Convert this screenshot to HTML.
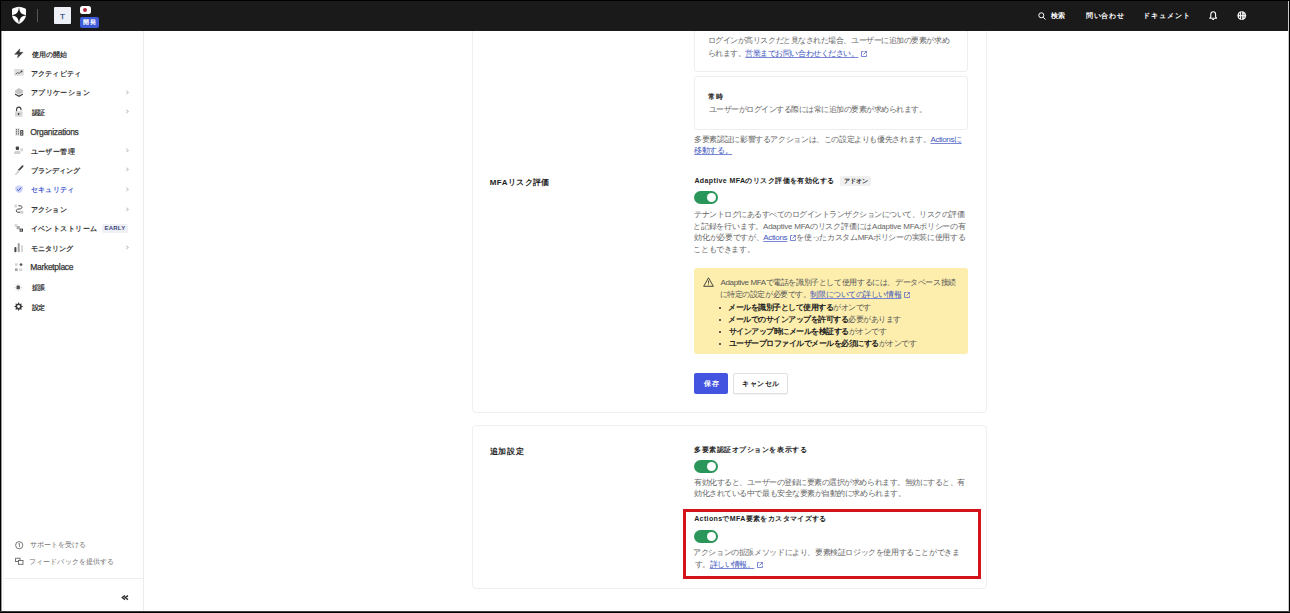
<!DOCTYPE html>
<html><head><meta charset="utf-8">
<style>
*{box-sizing:border-box;margin:0;padding:0}
html,body{width:1290px;height:613px;overflow:hidden;background:#fff}
body{font-family:"Liberation Sans",sans-serif;position:relative;color:#1e1e1e}
.ab{position:absolute;white-space:nowrap}
.bd{position:absolute;background:#000;z-index:10}
#hdr{position:absolute;left:1px;top:1px;width:1287px;height:30px;background:#1a1a1a;z-index:5}
#side{position:absolute;left:1px;top:31px;width:143px;height:580px;background:#fff;border-right:1px solid #ececec}
.hn{position:absolute;font-size:7px;font-weight:bold;color:#fff;line-height:12px;white-space:nowrap}
.nav{position:absolute;font-size:7px;font-weight:bold;color:#363636;white-space:nowrap;line-height:12px}
.chev{position:absolute;left:125px;width:3.3px;height:3.3px;border-right:0.8px solid #c8c8c8;border-top:0.8px solid #c8c8c8;transform:rotate(45deg)}
.card{position:absolute;left:472px;width:515px;border:1px solid #efefef;border-radius:4px;background:#fff}
.t{position:absolute;font-size:8px;line-height:12px;color:#666;white-space:nowrap}
.h{position:absolute;font-size:7px;line-height:12px;color:#1e1e1e;font-weight:bold;white-space:nowrap}
a{color:#4256bd;text-decoration:underline;text-decoration-color:#7a87d2}
.tog{position:absolute;left:694px;width:24px;height:13px;border-radius:7px;background:#2b9659}
.tog:after{content:"";position:absolute;right:2px;top:2px;width:9px;height:9px;border-radius:50%;background:#fff}
.ext{display:inline-block;width:6px;height:6px;margin-left:3px;vertical-align:-1px}
</style></head><body>
<div id="hdr">
  <svg class="ab" style="left:-1px;top:-1px" width="40" height="31" viewBox="0 0 40 31">
<path d="M12 9.8 C12 8.9 12.5 8.5 13.3 8.2 C15.2 7.4 17.2 6.9 19 6.7 C20.8 6.9 22.8 7.4 24.7 8.2 C25.5 8.5 26 8.9 26 9.8 L26 14.5 C26 18.8 23 22 19 24 C15 22 12 18.8 12 14.5 Z" fill="#fff"/>
<path d="M19 6.2 C19.5 11.8 20.4 14.3 26.6 15.2 C20.4 16.1 19.5 18.6 19 24.6 C18.5 18.6 17.6 16.1 11.4 15.2 C17.6 14.3 18.5 11.8 19 6.2 Z" fill="#1a1a1a"/>
</svg>
  <div class="ab" style="left:36px;top:8px;width:1px;height:13px;background:#555"></div>
  <div class="ab" style="left:53px;top:6px;width:17px;height:17px;background:#eef0f7;border-radius:1px;font-size:8px;color:#3d5585;text-align:center;line-height:19px;-webkit-text-stroke:0.25px #3d5585">T</div>
  <div class="ab" style="left:79px;top:4.5px;width:11px;height:8px;background:#fff;border-radius:2.5px"><div class="ab" style="left:3.3px;top:2px;width:4px;height:4px;border-radius:50%;background:#b3283a"></div></div>
  <div class="ab" style="left:79px;top:15.5px;width:19px;height:11px;background:#3f5bd8;border-radius:2px"><div class="ab" style="left:3px;top:1.5px;font-size:6px;font-weight:bold;color:#fff;line-height:8px;letter-spacing:0.5px">開発</div></div>
  <svg class="ab" style="left:1037px;top:11px" width="8" height="8" viewBox="0 0 8 8"><circle cx="3.3" cy="3.3" r="2.5" fill="none" stroke="#fff" stroke-width="1"/><path d="M5.1 5.1 L7.5 7.5" stroke="#fff" stroke-width="1"/></svg>
  <div class="hn" id="h1" style="left:1050.00px;top:9.00px;letter-spacing:0.400px">検索</div>
  <div class="hn" id="h2" style="left:1085.00px;top:9.00px;letter-spacing:0.700px">問い合わせ</div>
  <div class="hn" id="h3" style="left:1142.00px;top:9.00px;letter-spacing:1.000px">ドキュメント</div>
  <svg class="ab" style="left:-1px;top:-1px" width="1290" height="31" viewBox="0 0 1290 31">
<path d="M1209.8 18.2 L1210.8 17 L1210.8 14.5 C1210.8 12.8 1211.9 11.8 1213.2 11.8 C1214.5 11.8 1215.6 12.8 1215.6 14.5 L1215.6 17 L1216.6 18.2 Z" fill="none" stroke="#fff" stroke-width="1.1" stroke-linejoin="round"/>
<path d="M1212.3 19.5 L1214.1 19.5" stroke="#fff" stroke-width="1"/>
<circle cx="1241.8" cy="15.6" r="4.4" fill="#f4f4f4"/>
<g fill="#1a1a1a"><rect x="1239.1" y="13.3" width="0.8" height="1.8"/><rect x="1239.1" y="16.2" width="0.8" height="1.8"/><rect x="1241.2" y="12.2" width="0.9" height="2.9"/><rect x="1241.2" y="16.2" width="0.9" height="3.2"/></g>
<g fill="#666"><rect x="1242.8" y="13.8" width="2.4" height="0.7"/><rect x="1242.8" y="16.6" width="2.4" height="0.7"/></g>
</svg>
</div>
<div id="side">
</div>
<div id="main" class="ab" style="left:0;top:0;width:1290px;height:613px">
<svg class="ab" style="left:0;top:0" width="143" height="613" viewBox="0 0 143 613">
<path d="M19.8 48.9 L14.7 54.3 L18.3 54.3 L17.6 57.8 L23 52.3 L19.3 52.3 Z" fill="#3c3c3c" stroke="#3c3c3c" stroke-width="0.5" stroke-linejoin="round"/>
<rect x="14.2" y="69" width="9.6" height="6.8" rx="0.6" fill="#dedede"/>
<path d="M15.8 74.2 L17.6 72.6 L19 73.4 L21.2 71.6" fill="none" stroke="#555" stroke-width="0.9"/><circle cx="21.6" cy="71.4" r="0.9" fill="#444"/>
<path d="M19 88 L23 90.6 L23 92.4 L19 94.8 L15 92.4 L15 90.6 Z" fill="#c4c4c4"/>
<path d="M15 93.4 L19 95.6 L23 93.4 L23 94.8 L19 97 L15 94.8 Z" fill="#3c3c3c"/>
<path d="M16.6 111.5 L16.6 109.6 C16.6 108 17.6 107.1 18.8 107.1 C20 107.1 21 108 21 109.6 L21 110.3" fill="none" stroke="#3c3c3c" stroke-width="1.1"/>
<rect x="15" y="111.2" width="7.5" height="5.5" rx="0.8" fill="#d6d6d6"/><circle cx="18.6" cy="114" r="0.9" fill="#3a3a3a"/>
<rect x="15.3" y="128.4" width="4.3" height="7.2" fill="#d8d8d8"/>
<g fill="#555"><rect x="16" y="129.2" width="1" height="1"/><rect x="18" y="129.2" width="1" height="1"/><rect x="16" y="131.3" width="1" height="1"/><rect x="18" y="131.3" width="1" height="1"/><rect x="16" y="133.4" width="1" height="1"/><rect x="18" y="133.4" width="1" height="1"/></g>
<rect x="20.2" y="130.1" width="3.1" height="5.5" fill="#3c3c3c"/><rect x="21.2" y="131.2" width="1.1" height="1.3" fill="#fff"/><rect x="21.2" y="133.4" width="1.1" height="1.3" fill="#fff"/>
<rect x="15.8" y="146.5" width="3.2" height="3.6" rx="0.8" fill="#444"/>
<path d="M14.2 154.1 L14.2 152.6 C14.2 151.5 15 150.9 16 150.9 L18.8 150.9 C19.8 150.9 20.4 151.5 20.4 152.6 L20.4 154.1 Z" fill="#cfcfcf"/>
<rect x="20.3" y="148.3" width="2.8" height="2.9" fill="#d6d6d6"/>
<path d="M22.7 166.2 L18.6 170.4" stroke="#444" stroke-width="1.7" stroke-linecap="round"/>
<path d="M18.9 170 L15.2 174.4 L16.2 174.6 L19.6 171 Z" fill="#cfcfcf" stroke="#cfcfcf" stroke-width="0.8" stroke-linejoin="round"/>
<path d="M19 185.3 L22.8 186.8 L22.8 189.2 C22.8 191.2 21 192.5 19 192.9 C17 192.5 15.3 191.2 15.3 189.2 L15.3 186.8 Z" fill="#cdd5f8"/>
<path d="M16.9 189.2 L18.5 190.7 L21.2 187.6" fill="none" stroke="#3e4fc4" stroke-width="1"/>
<rect x="14.4" y="204.6" width="2.6" height="2.8" fill="#d4d4d4"/>
<rect x="20.4" y="210.8" width="2.9" height="2.9" fill="#cfcfcf"/>
<path d="M18.4 205.8 L20.6 205.8 C22.2 205.8 22.6 208.4 20.6 208.8 L17.6 209.2 C15.8 209.5 15.8 212.2 17.6 212.2 L20.2 212.2" fill="none" stroke="#444" stroke-width="1"/>
<rect x="14.5" y="224" width="2.8" height="2.8" fill="#dadada"/>
<rect x="16.6" y="226" width="3.2" height="3.2" fill="#a8a8a8"/>
<rect x="19.6" y="228.6" width="3.4" height="3.1" fill="#3c3c3c"/><rect x="20.6" y="229.6" width="1.3" height="1.1" fill="#fff"/>
<rect x="14.4" y="247" width="2" height="5.2" rx="0.9" fill="#444"/>
<rect x="17.7" y="243" width="2" height="9.2" rx="0.9" fill="#a0a0a0"/>
<rect x="21" y="245" width="2" height="7.2" rx="0.9" fill="#d8d8d8"/>
<rect x="15" y="263.3" width="2.6" height="2.7" fill="#d6d6d6"/>
<path d="M21 263 L22.7 264.6 L21 266.2 L19.3 264.6 Z" fill="#555"/>
<rect x="15" y="268.3" width="2.7" height="2.8" fill="#a8a8a8"/>
<rect x="19.2" y="268.3" width="3.2" height="2.8" fill="#dadada"/>
<rect x="16.5" y="285.5" width="3.4" height="3.8" rx="0.5" fill="#555"/>
<path d="M18.2 283.2 L18.2 284.8 M18.2 290 L18.2 291.5 M14.6 287.4 L16 287.4 M20.4 287.4 L22.4 287.4 M15.4 284.6 L16.4 285.6 M21.2 284.6 L20.2 285.6 M15.4 290.2 L16.4 289.2 M21.2 290.2 L20.2 289.2" stroke="#d2d2d2" stroke-width="0.9"/>
<path d="M18.6 302 L19.6 303.9 L21.7 303.4 L21.3 305.5 L23.2 306.5 L21.3 307.6 L21.7 309.7 L19.6 309.2 L18.6 311.1 L17.6 309.2 L15.5 309.7 L15.9 307.6 L14 306.5 L15.9 305.5 L15.5 303.4 L17.6 303.9 Z" fill="#3c3c3c"/>
<circle cx="18.6" cy="306.5" r="1.4" fill="#fff"/>
<circle cx="19.2" cy="545.2" r="3.6" fill="none" stroke="#555" stroke-width="0.8"/>
<path d="M18.4 543.9 L19.5 543.4 L19.5 546.9" fill="none" stroke="#555" stroke-width="0.7"/>
<rect x="15.6" y="558.2" width="4.4" height="3.4" fill="none" stroke="#555" stroke-width="0.8"/>
<rect x="18.4" y="560.4" width="4.6" height="3.9" fill="#fff" stroke="#555" stroke-width="0.8"/>
</svg>

<div class="nav" id="s1" style="left:31.60px;top:49.20px;letter-spacing:0.100px">使用の開始</div>
<div class="nav" id="s2" style="left:30.60px;top:67.80px;letter-spacing:0.299px">アクティビティ</div>
<div class="nav" id="s3" style="left:30.60px;top:87.40px;letter-spacing:0.459px">アプリケーション</div><div class="chev" style="top:91px"></div>
<div class="nav" id="s4" style="left:31.60px;top:106.60px;letter-spacing:-0.800px">認証</div><div class="chev" style="top:110px"></div>
<div class="nav" id="s5" style="left:30.20px;top:125.80px;letter-spacing:-0.317px;font-size:8.5px;font-weight:normal;-webkit-text-stroke:0.25px #363636">Organizations</div>
<div class="nav" id="s6" style="left:30.60px;top:145.80px;letter-spacing:0.400px">ユーザー管理</div><div class="chev" style="top:149px"></div>
<div class="nav" id="s7" style="left:30.60px;top:164.80px;letter-spacing:0.035px">ブランディング</div><div class="chev" style="top:168px"></div>
<div class="nav" id="s8" style="left:30.60px;top:183.60px;color:#4a5fd0;letter-spacing:0.320px">セキュリティ</div><div class="chev" style="top:188px"></div>
<div class="nav" id="s9" style="left:30.60px;top:204.20px;letter-spacing:0.250px">アクション</div><div class="chev" style="top:208px"></div>
<div class="nav" id="s10" style="left:30.60px;top:222.60px;letter-spacing:0.446px">イベントストリーム</div>
<div class="ab" style="left:102px;top:224px;width:26px;height:9px;background:#eef0f6;border-radius:2px;font-size:6px;font-weight:bold;color:#3a4a7a;text-align:center;line-height:9px;letter-spacing:0.2px">EARLY</div>
<div class="nav" id="s11" style="left:30.60px;top:242.80px;letter-spacing:0.080px">モニタリング</div><div class="chev" style="top:246px"></div>
<div class="nav" id="s12" style="left:30.20px;top:261.40px;letter-spacing:-0.300px;font-size:8.5px;font-weight:normal;-webkit-text-stroke:0.25px #363636">Marketplace</div>
<div class="nav" id="s13" style="left:31.60px;top:281.80px;letter-spacing:-0.400px">拡張</div>
<div class="nav" id="s14" style="left:31.60px;top:302.20px;letter-spacing:-0.800px">設定</div>
<div class="nav" id="s15" style="left:30.00px;top:539.40px;font-weight:normal;color:#6e6e6e;letter-spacing:0.056px">サポートを受ける</div>
<div class="nav" id="s16" style="left:29.00px;top:556.40px;font-weight:normal;color:#6e6e6e;letter-spacing:0.110px">フィードバックを提供する</div>
<div class="ab" style="left:1px;top:578px;width:142px;height:1px;background:#eeeeee"></div>
<svg class="ab" style="left:0;top:0" width="143" height="613" viewBox="0 0 143 613"><path d="M125 595.6 L122.2 597.6 L125 599.6 M128 595.6 L125.2 597.6 L128 599.6" fill="none" stroke="#2a2a2a" stroke-width="1.3"/></svg>

<div class="card" style="top:-60px;height:473px"></div>
<div class="card" style="top:425px;height:164px"></div>
<div class="ab" style="left:694px;top:-40px;width:274px;height:112px;border:1px solid #eeeeee;border-radius:3px"></div>
<div class="ab" style="left:694px;top:76px;width:274px;height:54px;border:1px solid #eeeeee;border-radius:3px"></div>
<div class="t" id="m1" style="left:707.60px;top:35.20px;letter-spacing:-0.452px">ログインが高リスクだと見なされた場合、ユーザーに追加の要素が求め</div>
<div class="t" id="m2" style="left:707.60px;top:47.70px;letter-spacing:-0.466px">られます。<a>営業までお問い合わせください。</a><svg class="ext" viewBox="0 0 6 6"><path d="M2.5 0.5 L0.5 0.5 L0.5 5.5 L5.5 5.5 L5.5 3.5 M3.5 0.5 L5.5 0.5 L5.5 2.5 M5.5 0.5 L2.5 3.5" fill="none" stroke="#5a6ac8" stroke-width="0.8"/></svg></div>
<div class="h" id="m3" style="left:708.40px;top:91.20px;letter-spacing:0.800px">常時</div>
<div class="t" id="m4" style="left:708.60px;top:104.20px;letter-spacing:-0.490px">ユーザーがログインする際には常に追加の要素が求められます。</div>
<div class="t" id="m5" style="left:694.20px;top:134.00px;letter-spacing:-0.379px">多要素認証に影響するアクションは、この設定よりも優先されます。<a>Actionsに</a></div>
<div class="t" id="m6" style="left:694.20px;top:145.20px;letter-spacing:-0.400px"><a>移動する。</a></div>
<div class="h" id="m7" style="font-size:8px;left:489.80px;top:177.00px;letter-spacing:0.398px">MFAリスク評価</div>
<div class="h" id="m8" style="left:694.40px;top:174.90px;letter-spacing:0.402px">Adaptive MFAのリスク評価を有効化する</div>
<div class="ab" style="left:840px;top:176px;width:31px;height:10px;background:#f0f0f0;border-radius:2px;font-size:6px;font-weight:bold;color:#333;text-align:center;line-height:10px">アドオン</div>
<div class="tog" style="top:191px"></div>
<div class="t" id="m9" style="left:694.20px;top:209.00px;letter-spacing:-0.495px">テナントログにあるすべてのログイントランザクションについて、リスクの評価</div>
<div class="t" id="m10" style="left:693.20px;top:220.70px;letter-spacing:-0.239px">と記録を行います。Adaptive MFAのリスク評価にはAdaptive MFAポリシーの有</div>
<div class="t" id="m11" style="left:694.20px;top:232.20px;letter-spacing:-0.324px">効化が必要ですが、<a>Actions</a><svg class="ext" viewBox="0 0 6 6"><path d="M2.5 0.5 L0.5 0.5 L0.5 5.5 L5.5 5.5 L5.5 3.5 M3.5 0.5 L5.5 0.5 L5.5 2.5 M5.5 0.5 L2.5 3.5" fill="none" stroke="#5a6ac8" stroke-width="0.8"/></svg>を使ったカスタムMFAポリシーの実装に使用する</div>
<div class="t" id="m12" style="left:693.20px;top:243.50px;letter-spacing:-0.339px">こともできます。</div>
<div class="ab" style="left:694px;top:268px;width:274px;height:86px;background:#fdeead;border-radius:3px"></div>
<svg class="ab" style="left:703px;top:277px" width="11" height="10" viewBox="0 0 11 10"><path d="M5.5 0.8 L10.3 9.3 L0.7 9.3 Z" fill="none" stroke="#333" stroke-width="0.9" stroke-linejoin="round"/><path d="M5.5 3.6 L5.5 6.4" stroke="#333" stroke-width="0.9"/><circle cx="5.5" cy="7.8" r="0.5" fill="#333"/></svg>
<div class="t" id="m13" style="left:720.60px;top:277.20px;color:#555;letter-spacing:-0.395px">Adaptive MFAで電話を識別子として使用するには、データベース接続</div>
<div class="t" id="m14" style="left:719.60px;top:289.30px;color:#555;letter-spacing:-0.435px">に特定の設定が必要です。<a>制限についての詳しい情報</a><svg class="ext" viewBox="0 0 6 6"><path d="M2.5 0.5 L0.5 0.5 L0.5 5.5 L5.5 5.5 L5.5 3.5 M3.5 0.5 L5.5 0.5 L5.5 2.5 M5.5 0.5 L2.5 3.5" fill="none" stroke="#5a6ac8" stroke-width="0.8"/></svg></div>
<div class="ab" style="left:718.8px;top:306.7px;width:2.6px;height:2.6px;border-radius:50%;background:#2a2a2a"></div>
<div class="ab" style="left:718.8px;top:318.7px;width:2.6px;height:2.6px;border-radius:50%;background:#2a2a2a"></div>
<div class="ab" style="left:718.8px;top:330.7px;width:2.6px;height:2.6px;border-radius:50%;background:#2a2a2a"></div>
<div class="ab" style="left:718.8px;top:342.7px;width:2.6px;height:2.6px;border-radius:50%;background:#2a2a2a"></div>
<div class="t" id="m15" style="left:728.00px;top:302.40px;color:#555;letter-spacing:-0.500px"><b style="color:#222">メールを識別子として使用する</b>がオンです</div>
<div class="t" id="m16" style="left:728.00px;top:314.00px;color:#555;letter-spacing:-0.482px"><b style="color:#222">メールでのサインアップを許可する</b>必要があります</div>
<div class="t" id="m17" style="left:729.00px;top:325.80px;color:#555;letter-spacing:-0.510px"><b style="color:#222">サインアップ時にメールを検証する</b>がオンです</div>
<div class="t" id="m18" style="left:729.00px;top:338.00px;color:#555;letter-spacing:-0.515px"><b style="color:#222">ユーザープロファイルでメールを必須にする</b>がオンです</div>
<div class="ab" style="left:694px;top:373px;width:34px;height:21px;background:#4355e0;border-radius:2px"></div>
<div class="h" id="b1" style="left:703.80px;top:377.80px;color:#fff;letter-spacing:1.600px">保存</div>
<div class="ab" style="left:733px;top:373px;width:55px;height:21px;background:#fff;border:1px solid #e0e0e0;border-radius:2px;box-shadow:0 0.5px 0 #e8e8e8"></div>
<div class="h" id="b2" style="left:742.40px;top:377.80px;color:#222;letter-spacing:0.450px">キャンセル</div>
<div class="h" id="m19" style="font-size:8px;left:489.60px;top:445.60px;letter-spacing:0.868px">追加設定</div>
<div class="h" id="m20" style="left:694.20px;top:443.70px;letter-spacing:0.527px">多要素認証オプションを表示する</div>
<div class="tog" style="top:460px"></div>
<div class="t" id="m21" style="left:694.20px;top:476.60px;letter-spacing:-0.486px">有効化すると、ユーザーの登録に要素の選択が求められます。無効にすると、有</div>
<div class="t" id="m22" style="left:694.20px;top:488.00px;letter-spacing:-0.463px">効化されている中で最も安全な要素が自動的に求められます。</div>
<div class="h" id="m23" style="left:694.20px;top:513.10px;letter-spacing:0.373px">ActionsでMFA要素をカスタマイズする</div>
<div class="tog" style="top:530px"></div>
<div class="t" id="m24" style="left:693.20px;top:547.20px;letter-spacing:-0.390px">アクションの拡張メソッドにより、要素検証ロジックを使用することができま</div>
<div class="t" id="m25" style="left:694.80px;top:559.00px;letter-spacing:-0.572px">す。<a>詳しい情報。</a><svg class="ext" viewBox="0 0 6 6"><path d="M2.5 0.5 L0.5 0.5 L0.5 5.5 L5.5 5.5 L5.5 3.5 M3.5 0.5 L5.5 0.5 L5.5 2.5 M5.5 0.5 L2.5 3.5" fill="none" stroke="#5a6ac8" stroke-width="0.8"/></svg></div>
<div class="ab" style="left:683px;top:509px;width:298px;height:70px;border:3px solid #d3121b"></div>
</div>
<div class="ab" style="left:1288px;top:1px;width:1px;height:610px;background:#c8c8c8;z-index:9"></div><div class="ab" style="left:3px;top:31px;width:1px;height:580px;background:#f8f8f8"></div><div class="ab" style="left:1px;top:31px;width:1px;height:580px;background:#9a9a9a;z-index:9"></div><div class="bd" style="left:0;top:0;width:1290px;height:1px"></div><div class="bd" style="left:0;top:0;width:1px;height:613px"></div><div class="bd" style="left:1289px;top:0;width:1px;height:613px"></div><div class="bd" style="left:0;top:611px;width:1290px;height:1px;background:#3c3c3c"></div><div class="bd" style="left:0;top:612px;width:1290px;height:1px"></div>
</body></html>
